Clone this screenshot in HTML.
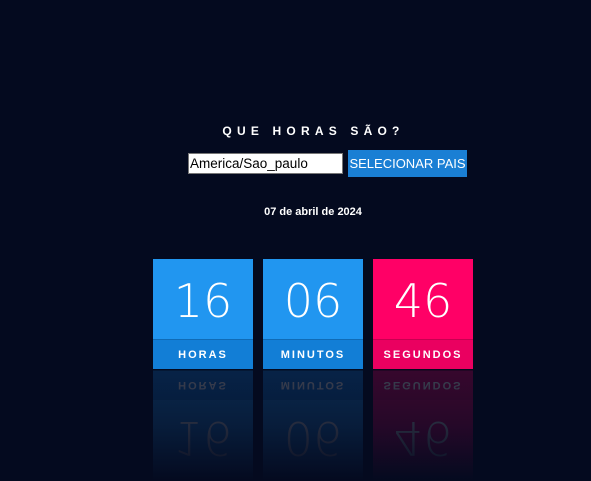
<!DOCTYPE html>
<html><head><meta charset="utf-8"><style>
html,body{margin:0;padding:0;width:591px;height:481px;overflow:hidden;background:#040a1f;font-family:"Liberation Sans",sans-serif;color:#fff;position:relative}
.title{position:absolute;top:124px;left:0;width:627px;text-align:center;font-weight:bold;font-size:12px;letter-spacing:5.2px}
.inp{position:absolute;left:188px;top:153px;width:152px;height:19px;background:#fff;border:1px solid #767676;color:#000;font-size:13.5px;line-height:19px;padding-left:1px;box-sizing:content-box}
.btn{position:absolute;left:348px;top:150px;width:119px;height:27px;background:#1a7fd4;color:#fff;font-size:13px;line-height:27px;text-align:center}
.date{position:absolute;top:206px;left:0;width:626px;text-align:center;font-weight:bold;font-size:11px}
.box{position:absolute;top:259px;width:100px;height:110px}
.num{height:80px;font-family:"DejaVu Sans",sans-serif;font-weight:200;font-size:46px;line-height:84px;text-align:center}
.lab{height:29px;border-top:1px solid rgba(0,0,0,.15);font-size:11px;font-weight:bold;letter-spacing:2px;line-height:31px;text-align:center}
.b .num{background:#2196f0}.b .lab{background:#127ed6}
.p .num{background:#ff0066}.p .lab{background:#ea0060}
.refl{position:absolute;top:370px;left:0;width:591px;height:111px;overflow:hidden}
.refl .box{top:0;transform:scaleY(-1);opacity:.22}
.refl .box .lab{border-top:none;border-bottom:1px solid rgba(0,0,0,.4)}
.fade{position:absolute;top:370px;left:0;width:591px;height:111px;background:linear-gradient(to bottom,rgba(4,10,31,0) 0%,rgba(4,10,31,.4) 50%,rgba(4,10,31,1) 100%)}
</style></head><body>
<div class="title">QUE HORAS SÃO?</div>
<div class="inp">America/Sao_paulo</div>
<div class="btn">SELECIONAR PAIS</div>
<div class="date">07 de abril de 2024</div>
<div class="box b" style="left:153px"><div class="num">16</div><div class="lab">HORAS</div></div>
<div class="box b" style="left:263px"><div class="num">06</div><div class="lab">MINUTOS</div></div>
<div class="box p" style="left:373px"><div class="num">46</div><div class="lab">SEGUNDOS</div></div>
<div class="refl">
<div class="box b" style="left:153px"><div class="num">16</div><div class="lab">HORAS</div></div>
<div class="box b" style="left:263px"><div class="num">06</div><div class="lab">MINUTOS</div></div>
<div class="box p" style="left:373px"><div class="num">46</div><div class="lab">SEGUNDOS</div></div>
</div>
<div class="fade"></div>
</body></html>
